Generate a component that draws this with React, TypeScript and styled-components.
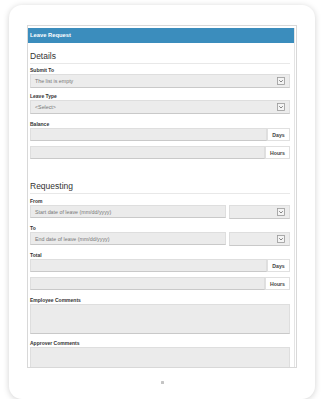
import styled, { createGlobalStyle } from 'styled-components';

const GlobalStyle = createGlobalStyle`
    body {
        margin: 0;
        background: #ffffff;
        font-family: "Liberation Sans", Arial, sans-serif;
    }
`;

const StyledPage = styled.div`
    padding: 5px 9px 0;
`;

const StyledDevice = styled.div`
    width: 306px;
    height: 394px;
    box-sizing: border-box;
    background: #ffffff;
    border-radius: 13px;
    box-shadow: 0 1px 6px rgba(0, 0, 0, 0.18);
    padding: 20px 18px 0;
    display: flex;
    flex-direction: column;
    align-items: center;
`;

const StyledScreen = styled.div`
    width: 270px;
    height: 343px;
    box-sizing: border-box;
    border: 1px solid #d8d8d8;
    padding-top: 2px;
    overflow: hidden;
    display: flex;
    flex-direction: column;
`;

const StyledPanel = styled.div`
    flex: 1;
    margin-right: 1px;
    border-right: 1px solid #e4e4e4;
    overflow: hidden;
`;

const StyledTitleBar = styled.div`
    height: 15px;
    line-height: 15px;
    background: #3b8dbd;
    color: #ffffff;
    font-weight: bold;
    font-size: 5.8px;
    padding-left: 2px;
`;

const StyledBody = styled.div`
    padding: 0 4px 0 2px;
`;

const StyledHeading = styled.div<{ $top: number }>`
    margin-top: ${p => p.$top}px;
    font-size: 8.5px;
    line-height: 14px;
    color: #333333;
    border-bottom: 1px solid #e8e8e8;
`;

const StyledLabel = styled.div<{ $top: number }>`
    margin-top: ${p => p.$top}px;
    font-size: 5px;
    font-weight: bold;
    line-height: 8px;
    color: #333333;
`;

const StyledSelect = styled.div<{ $width?: number }>`
    height: 14px;
    box-sizing: border-box;
    ${p => (p.$width ? `width: ${p.$width}px;` : 'flex: 1;')}
    background: #ececec;
    border: 1px solid #dedede;
    border-bottom-color: #c9c9c9;
    display: flex;
    align-items: center;
    justify-content: space-between;
    padding: 0 4px;
    font-size: 5.3px;
    color: #777777;
`;

const StyledRow = styled.div<{ $gap?: number; $top?: number }>`
    display: flex;
    height: 13px;
    gap: ${p => p.$gap ?? 0}px;
    margin-top: ${p => p.$top ?? 0}px;
`;

const StyledInput = styled.div`
    flex: 1;
    box-sizing: border-box;
    background: #ebebeb;
    border: 1px solid #dedede;
    border-bottom-color: #c9c9c9;
    display: flex;
    align-items: center;
    padding: 0 4px;
    font-size: 5.3px;
    color: #777777;
`;

const StyledAddon = styled.div<{ $width: number }>`
    width: ${p => p.$width}px;
    box-sizing: border-box;
    background: #ffffff;
    border: 1px solid #e0e0e0;
    display: flex;
    align-items: center;
    justify-content: center;
    font-size: 5.2px;
    font-weight: bold;
    color: #444444;
`;

const StyledTextArea = styled.div`
    height: 30px;
    box-sizing: border-box;
    background: #ebebeb;
    border: 1px solid #dedede;
    border-bottom-color: #c9c9c9;
`;

const StyledHomeDot = styled.div`
    width: 3px;
    height: 3px;
    margin-top: 13px;
    border-radius: 0.5px;
    background: #c4c4c4;
`;

const DropIcon = () => (
    <svg width="8" height="8" viewBox="0 0 8 8">
        <rect x="0.5" y="0.5" width="7" height="7" fill="#f4f4f4" stroke="#9a9a9a" strokeWidth="0.8" />
        <polyline points="2.2,3.2 4,5 5.8,3.2" fill="none" stroke="#666" strokeWidth="0.8" />
    </svg>
);

const App = () => {
    return (
        <StyledPage>
            <GlobalStyle />
            <StyledDevice>
                <StyledScreen>
                    <StyledPanel>
                        <StyledTitleBar>Leave Request</StyledTitleBar>
                        <StyledBody>
                            <StyledHeading $top={6}>Details</StyledHeading>

                            <StyledLabel $top={2}>Submit To</StyledLabel>
                            <StyledSelect>
                                The list is empty
                                <DropIcon />
                            </StyledSelect>

                            <StyledLabel $top={4}>Leave Type</StyledLabel>
                            <StyledSelect>
                                &lt;Select&gt;
                                <DropIcon />
                            </StyledSelect>

                            <StyledLabel $top={6}>Balance</StyledLabel>
                            <StyledRow>
                                <StyledInput />
                                <StyledAddon $width={23}>Days</StyledAddon>
                            </StyledRow>
                            <StyledRow $top={5}>
                                <StyledInput />
                                <StyledAddon $width={25}>Hours</StyledAddon>
                            </StyledRow>

                            <StyledHeading $top={20}>Requesting</StyledHeading>

                            <StyledLabel $top={3}>From</StyledLabel>
                            <StyledRow $gap={3}>
                                <StyledInput>Start date of leave (mm/dd/yyyy)</StyledInput>
                                <StyledSelect $width={61}>
                                    <span />
                                    <DropIcon />
                                </StyledSelect>
                            </StyledRow>

                            <StyledLabel $top={6}>To</StyledLabel>
                            <StyledRow $gap={3}>
                                <StyledInput>End date of leave (mm/dd/yyyy)</StyledInput>
                                <StyledSelect $width={61}>
                                    <span />
                                    <DropIcon />
                                </StyledSelect>
                            </StyledRow>

                            <StyledLabel $top={6}>Total</StyledLabel>
                            <StyledRow>
                                <StyledInput />
                                <StyledAddon $width={23}>Days</StyledAddon>
                            </StyledRow>
                            <StyledRow $top={5}>
                                <StyledInput />
                                <StyledAddon $width={25}>Hours</StyledAddon>
                            </StyledRow>

                            <StyledLabel $top={6}>Employee Comments</StyledLabel>
                            <StyledTextArea />

                            <StyledLabel $top={5}>Approver Comments</StyledLabel>
                            <StyledTextArea />
                        </StyledBody>
                    </StyledPanel>
                </StyledScreen>
                <StyledHomeDot />
            </StyledDevice>
        </StyledPage>
    );
};

export default App;
